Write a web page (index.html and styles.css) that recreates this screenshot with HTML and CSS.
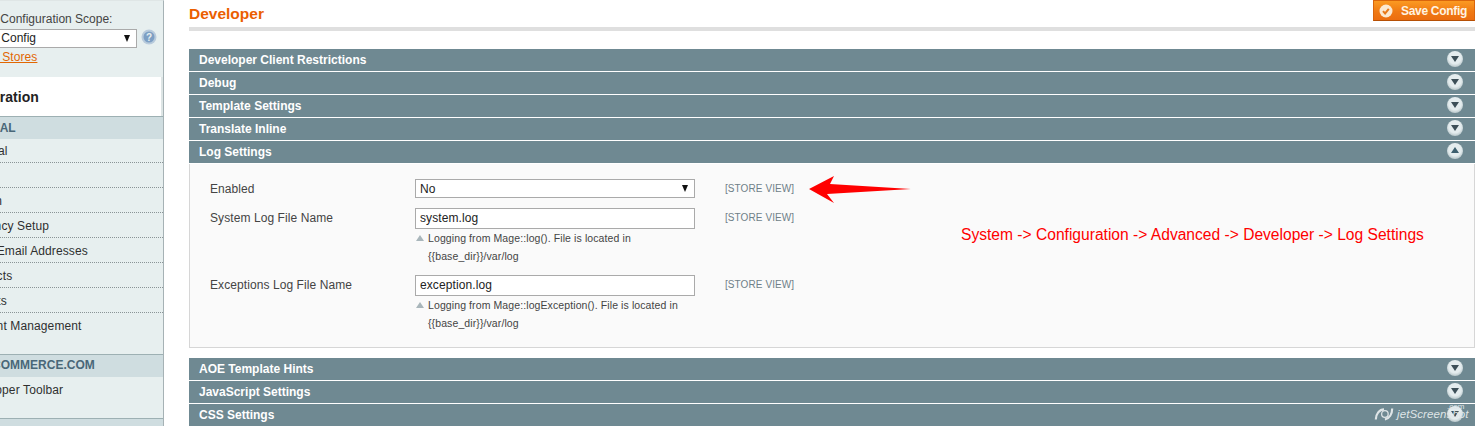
FILE: index.html
```html
<!DOCTYPE html>
<html lang="en">
<head>
<meta charset="utf-8">
<title>Developer</title>
<link rel="stylesheet" href="styles.css">
</head>
<body>
<div class="page">
  <aside class="side">
    <div class="scope">
      <div class="scope-label">Current Configuration Scope:</div>
      <div class="scope-row">
        <div class="scope-select"><span>Default Config</span><i class="caret"></i></div>
        <svg class="help" width="16" height="16" viewBox="0 0 16 16"><circle cx="8" cy="8" r="7.5" fill="#b9cbdc"/><circle cx="8" cy="8" r="5.5" fill="#7d9fc4"/><text x="8" y="11.5" text-anchor="middle" class="help-q">?</text></svg>
      </div>
      <a class="manage">Manage Stores</a>
    </div>
    <div class="side-title">Configuration</div>
    <div class="side-head">GENERAL</div>
    <ul class="side-list">
      <li class="first">General</li>
      <li>Web</li>
      <li>Design</li>
      <li>Currency Setup</li>
      <li>Store Email Addresses</li>
      <li>Contacts</li>
      <li>Reports</li>
      <li class="last">Content Management</li>
    </ul>
    <div class="side-head commerce">MAGENTOCOMMERCE.COM</div>
    <ul class="side-list">
      <li class="last">Developer Toolbar</li>
    </ul>
    <div class="side-head tail">SERVICES</div>
  </aside>
  <main class="main">
    <header class="top">
      <h1>Developer</h1>
      <button class="save"><svg width="16" height="16" viewBox="0 0 16 16"><circle cx="8" cy="8" r="6.5" fill="#fbe9d2"/><path d="M5 8.2l2.1 2.3 3.7-4.6" fill="none" stroke="#e8791a" stroke-width="2"/></svg><span>Save Config</span></button>
    </header>
    <div class="bar">Developer Client Restrictions<i class="toggle"></i></div>
    <div class="bar">Debug<i class="toggle"></i></div>
    <div class="bar">Template Settings<i class="toggle"></i></div>
    <div class="bar">Translate Inline<i class="toggle"></i></div>
    <div class="bar">Log Settings<i class="toggle open"></i></div>
    <section class="panel">
      <div class="rows">
        <div class="row row-a">
          <label>Enabled</label>
          <div class="field"><div class="select"><span>No</span><i class="caret"></i></div></div>
          <span class="scope-tag">[STORE VIEW]</span>
        </div>
        <div class="row row-b">
          <label>System Log File Name</label>
          <div class="field"><div class="input">system.log</div>
            <p class="note">Logging from Mage::log(). File is located in {{base_dir}}/var/log</p></div>
          <span class="scope-tag">[STORE VIEW]</span>
        </div>
        <div class="row row-b">
          <label>Exceptions Log File Name</label>
          <div class="field"><div class="input">exception.log</div>
            <p class="note">Logging from Mage::logException(). File is located in {{base_dir}}/var/log</p></div>
          <span class="scope-tag">[STORE VIEW]</span>
        </div>
      </div>
      <svg class="arrow" width="102" height="28" viewBox="0 0 102 28"><path d="M0 13L25 0L21 8L102 13L18 18L25 27Z" fill="#f00"/></svg>
      <p class="caption">System -&gt; Configuration -&gt; Advanced -&gt; Developer -&gt; Log Settings</p>
    </section>
    <div class="bar">AOE Template Hints<i class="toggle"></i></div>
    <div class="bar">JavaScript Settings<i class="toggle"></i></div>
    <div class="bar">CSS Settings<i class="toggle"></i></div>
  </main>
</div>
<div class="mark"><svg width="20" height="14" viewBox="0 0 22 14"><path d="M2 13C2 7 6 2 11 2" fill="none" stroke="#dfe5e7" stroke-width="2.4"/><circle cx="12" cy="7" r="3.6" fill="none" stroke="#dfe5e7" stroke-width="1.4"/><path d="M20 1C20 7 17 12 12 13" fill="none" stroke="#dfe5e7" stroke-width="2.4"/></svg><span>jetScreenshot</span><b>.com</b></div>
</body>
</html>
```

FILE: styles.css
```css
* { box-sizing: border-box; }
html, body { margin: 0; height: 426px; overflow: hidden; background: #fff; }
body { font: 12px/15px "Liberation Sans", Arial, sans-serif; color: #2f2f2f; position: relative; }
.page { display: flex; margin-left: -43px; width: 1520px; }
.side { flex: 0 0 207px; height: 426px; background: #e7efef; border-right: 1px solid #a6b2b5; border-top: 1px solid #dfe6e6; overflow: hidden; }
.scope { padding: 11px 0 0; height: 76px; }
.scope-label { color: #444; }
.scope-row { display: flex; align-items: center; gap: 4px; margin-top: 2px; }
.scope-select { flex: 0 0 180px; height: 19px; background: #fff; border: 1px solid #aaa; padding-left: 2px; display: flex; align-items: center; justify-content: space-between; color: #222; }
.caret { width: 0; height: 0; border-left: 3.5px solid transparent; border-right: 3.5px solid transparent; border-top: 7px solid #111; margin-right: 6px; }
.help { flex: none; margin-top: -3px; }
.help-q { font: bold 10px "Liberation Sans", sans-serif; fill: #e7efef; }
.manage { display: block; margin: 2px 0 0 -2px; color: #e26703; text-decoration: underline; letter-spacing: .08px; }
.side-title { height: 39px; background: #fff; border-right: 2px solid #dde5e5; font-size: 14px; font-weight: bold; line-height: 40px; color: #222; text-indent: -10px; }
.side-head { height: 23px; background: #cfdde0; border-top: 1px solid #9db0b3; font-weight: bold; line-height: 23px; color: #496778; }
.commerce { text-indent: -26px; line-height: 21px; }
.tail { line-height: 24px; }
.side-list { list-style: none; margin: 0; padding: 0; }
.side-list li { height: 25px; padding: 6px 0 0 7px; border-bottom: 1px dotted #8a9496; line-height: 15px; color: #2f2f2f; letter-spacing: .12px; }
.side-list li.first { height: 24px; padding-top: 5px; }
.side-list li.last { border-bottom: 0; height: 41px; }
.main { flex: 0 0 1286px; margin-left: 25px; }
.top { display: flex; justify-content: space-between; align-items: flex-start; height: 31px; border-bottom: 4px solid #dfdfdf; margin-bottom: 18px; }
h1 { margin: 6px 0 0; font-size: 15.5px; line-height: 16px; font-weight: bold; color: #eb5e00; }
.save { display: flex; align-items: center; gap: 7px; height: 21px; width: 102px; margin: 0; padding: 0 0 0 4px; border: 1px solid #d9650c; border-bottom-color: #b54f05; background: linear-gradient(#fb9a22, #f07a14 55%, #ec6d10); color: #fff3e2; font: bold 12px "Liberation Sans", sans-serif; letter-spacing: -.3px; white-space: nowrap; }
.save svg { flex: none; }
.bar { position: relative; height: 23px; border-bottom: 1px solid #fff; background: #6f8992; color: #fff; font-weight: bold; line-height: 22px; padding-left: 10px; }
.toggle { position: absolute; right: 12px; top: 2px; width: 16px; height: 16px; border-radius: 50%; background: radial-gradient(circle at 50% 42%, #e4ecee 50%, #c2cfd2 70%, #9aacb1 100%); }
.toggle::after { content: ""; position: absolute; left: 4px; top: 5px; border-left: 4px solid transparent; border-right: 4px solid transparent; border-top: 6px solid #3d4f58; }
.toggle.open::after { top: 4px; border-top: 0; border-bottom: 6px solid #3d5f6e; }
.panel { position: relative; height: 184px; background: #fafafa; border: 1px solid #d6d6d6; border-top: 0; margin-bottom: 10px; padding: 15px 0 0 20px; color: #444; }
.rows { display: flex; flex-direction: column; }
.row { display: flex; align-items: flex-start; }
.row-a { height: 29px; }
.row-b { height: 67px; }
.row label { flex: 0 0 205px; padding-top: 3px; letter-spacing: .08px; }
.field { flex: 0 0 280px; }
.select, .input { width: 280px; height: 21px; background: #fff; border: 1px solid #aaa; color: #222; line-height: 19px; padding-left: 4px; letter-spacing: .1px; }
.select { height: 19px; line-height: 19px; display: flex; justify-content: space-between; align-items: center; padding-top: 1px; }
.select .caret { margin-right: 6px; margin-top: -1px; }
.note { position: relative; margin: 0; padding: 0 0 0 13px; font-size: 10.5px; line-height: 18px; width: 270px; color: #444; letter-spacing: .1px; }
.note::before { content: ""; position: absolute; left: 1px; top: 6px; border-left: 4px solid transparent; border-right: 4px solid transparent; border-bottom: 6px solid #a9b6bb; }
.scope-tag { margin-left: 30px; padding-top: 2px; font-size: 10px; letter-spacing: .08px; color: #6f7f88; }
.arrow { position: absolute; left: 619px; top: 12px; }
.caption { position: absolute; left: 771px; top: 61px; margin: 0; font-size: 15.6px; line-height: 20px; color: #f00; white-space: nowrap; }
.mark { position: absolute; left: 1374px; top: 405px; height: 18px; display: flex; align-items: center; gap: 3px; color: #dfe5e7; font: italic 11.5px "Liberation Sans", sans-serif; letter-spacing: .1px; }
.mark b { position: absolute; right: 4px; top: -3px; font: 8px "Liberation Sans", sans-serif; }
```
